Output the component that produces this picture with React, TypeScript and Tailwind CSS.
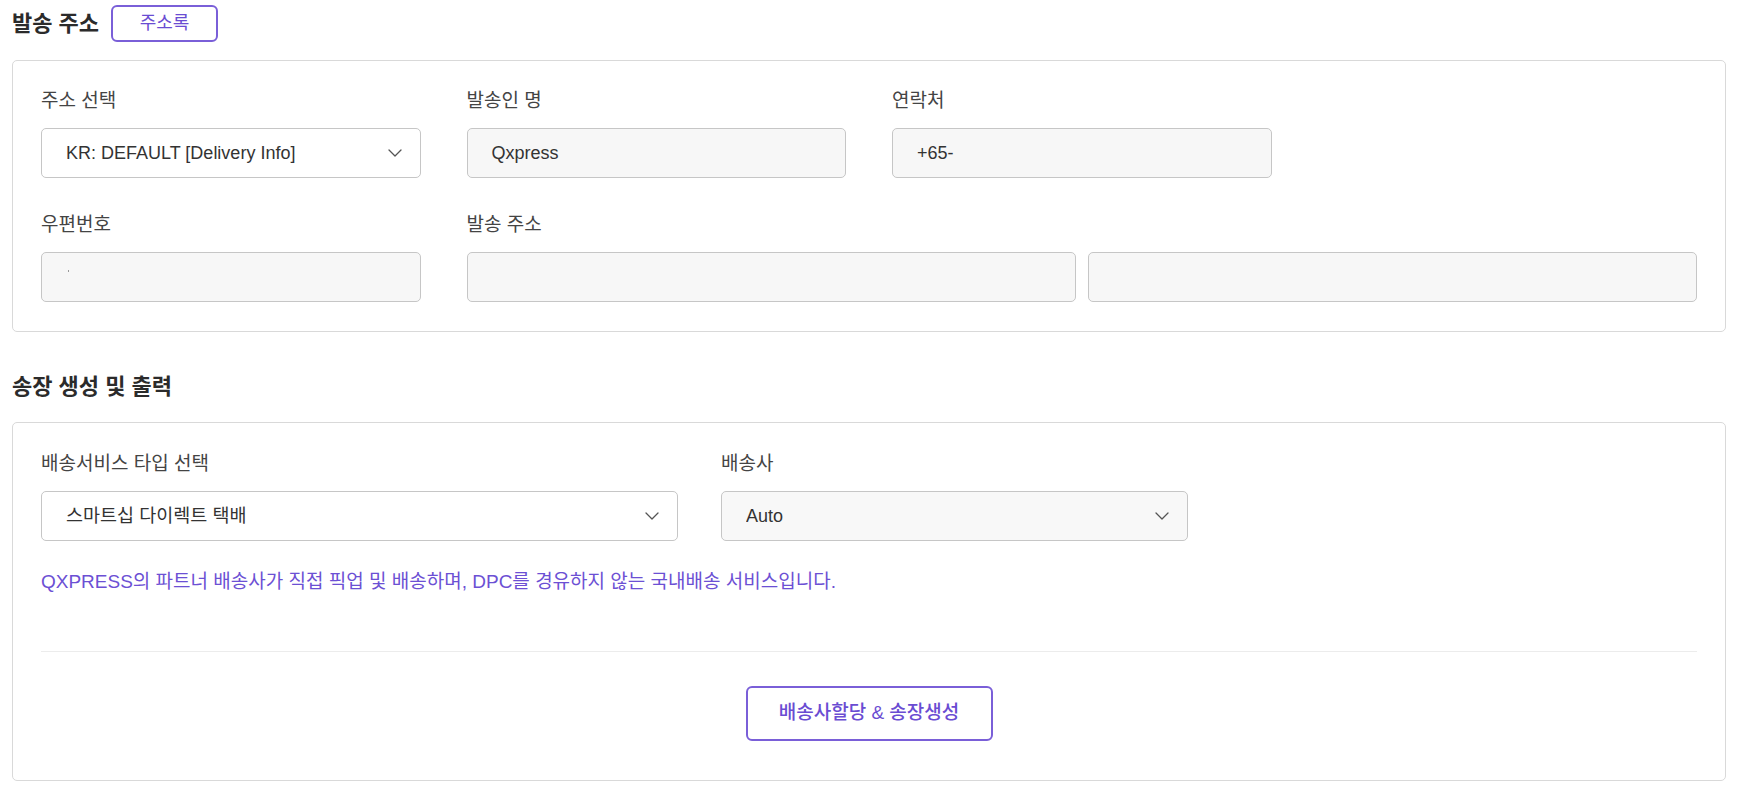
import type { ReactNode } from 'react';

const FONT = 'font-["Liberation_Sans","Noto_Sans_CJK_KR",sans-serif]';

function Chevron() {
  return (
    <svg width="14" height="8" viewBox="0 0 14 8" fill="none" className="shrink-0">
      <path d="M1 1l6 6 6-6" stroke="#555" strokeWidth="1.3" strokeLinecap="round" strokeLinejoin="round" />
    </svg>
  );
}

interface FieldProps {
  label: string;
  className?: string;
  children: ReactNode;
}

function Field({ label, className = '', children }: FieldProps) {
  return (
    <div className={`flex flex-col ${className}`}>
      <span className="text-[19px] leading-[26px] text-[#444] mb-[14px]">{label}</span>
      {children}
    </div>
  );
}

function ReadOnly({ value, className = '' }: { value?: ReactNode; className?: string }) {
  return (
    <div
      className={`h-[50px] flex items-center px-[24px] rounded-[5px] border border-[#c6c6c6] bg-[#f7f7f7] text-[18px] text-[#333] ${className}`}
    >
      {value}
    </div>
  );
}

function Select({ value, muted = false, korean = false }: { value: string; muted?: boolean; korean?: boolean }) {
  return (
    <div
      className={`h-[50px] flex items-center justify-between pl-[24px] pr-[18px] rounded-[5px] border border-[#c6c6c6] text-[#333] ${
        korean ? 'text-[18.5px]' : 'text-[18px]'
      } ${muted ? 'bg-[#f8f8f8]' : 'bg-white'}`}
    >
      <span className="truncate">{value}</span>
      <Chevron />
    </div>
  );
}

export default function App() {
  return (
    <div className={`w-[1738px] h-[787px] bg-white px-3 overflow-hidden ${FONT}`}>
      {/* 발송 주소 */}
      <div className="h-[47px] flex items-center">
        <h2 className="text-[22px] leading-[28px] font-bold text-[#2b2b2b]">발송 주소</h2>
        <button className="ml-[12px] h-[37px] w-[107px] rounded-[6px] border-2 border-[#7a5fd8] text-[18px] text-[#6a4cd2] bg-white">
          주소록
        </button>
      </div>

      <section className="mt-[13px] border border-[#d9d9d9] rounded-[5px] pt-[27px] pb-[29px] px-[28px]">
        <div className="grid grid-cols-4 gap-x-[46px] gap-y-[34px]">
          <Field label="주소 선택">
            <Select value="KR: DEFAULT [Delivery Info]" />
          </Field>
          <Field label="발송인 명">
            <ReadOnly value="Qxpress" />
          </Field>
          <Field label="연락처">
            <ReadOnly value="+65-" />
          </Field>
          <div />
          <Field label="우편번호">
            <ReadOnly value={<span className="block w-px h-[2px] bg-[#999] -mt-[12px] ml-[2px]" />} />
          </Field>
          <Field label="발송 주소" className="col-span-3">
            <div className="flex gap-[12px]">
              <ReadOnly className="flex-1" />
              <ReadOnly className="flex-1" />
            </div>
          </Field>
        </div>
      </section>

      {/* 송장 생성 및 출력 */}
      <h2 className="mt-[41px] mb-[21px] text-[22px] leading-[28px] font-bold text-[#2b2b2b]">송장 생성 및 출력</h2>

      <section className="border border-[#d9d9d9] rounded-[5px] pt-[28px] pb-[39px] px-[28px]">
        <div className="flex gap-[43px]">
          <Field label="배송서비스 타입 선택" className="w-[637px]">
            <Select value="스마트십 다이렉트 택배" korean />
          </Field>
          <Field label="배송사" className="w-[467px]">
            <Select value="Auto" muted />
          </Field>
        </div>
        <p className="mt-[28px] text-[19px] leading-[26px] text-[#6c50d4]">
          QXPRESS의 파트너 배송사가 직접 픽업 및 배송하며, DPC를 경유하지 않는 국내배송 서비스입니다.
        </p>
        <div className="mt-[56px] h-px bg-[#ececec]" />
        <div className="mt-[34px] flex justify-center">
          <button className="h-[55px] w-[247px] rounded-[6px] border-2 border-[#7a5fd8] bg-white text-[19px] font-medium text-[#6a4cd2]">
            배송사할당 &amp; 송장생성
          </button>
        </div>
      </section>
    </div>
  );
}
